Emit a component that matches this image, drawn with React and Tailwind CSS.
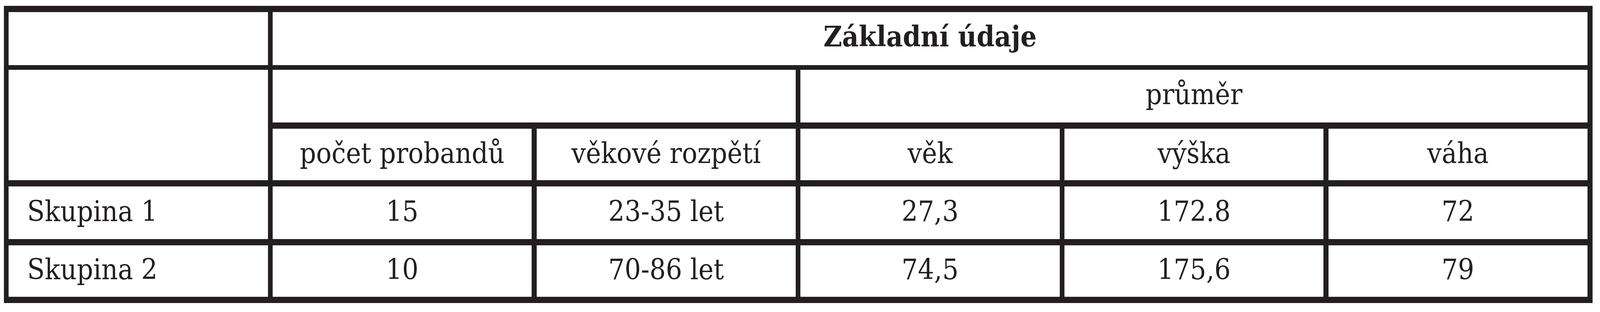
import React from 'react'

const rows = [
  { name: 'Skupina 1', values: ['15', '23-35 let', '27,3', '172.8', '72'] },
  { name: 'Skupina 2', values: ['10', '70-86 let', '74,5', '175,6', '79'] },
]

const headers = ['počet probandů', 'věkové rozpětí', 'věk', 'výška', 'váha']

function App() {
  return (
    <div className="min-h-screen bg-white pt-[15px] pl-[0.24vw]">
      <div className="w-[99.3vw] bg-[#231f20] pt-[16px] pb-[16px] pl-[0.3vw] pr-[0.32vw] flex flex-col gap-[12px] font-['DejaVu_Serif_Condensed','DejaVu_Serif',serif] font-stretch-condensed text-[1.78vw] leading-none text-[#231f20]">
        {/* title row */}
        <div className="grid grid-cols-6 gap-x-[0.3vw]">
          <div className="bg-white h-[136px]"></div>
          <div className="col-span-5 bg-white h-[136px] flex items-center justify-center pb-[10px] font-bold">
            Základní údaje
          </div>
        </div>

        {/* header + data */}
        <div className="grid grid-cols-6 grid-rows-[135px_132px_135px_132px] gap-x-[0.3vw] gap-y-[16px]">
          <div className="row-span-2 bg-white"></div>
          <div className="col-span-2 bg-white"></div>
          <div className="col-span-3 bg-white flex items-center justify-center pb-[9px]">průměr</div>

          {headers.map((h) => (
            <div key={h} className="bg-white flex items-center justify-center pb-[6px]">
              {h}
            </div>
          ))}

          {rows.map((r) => (
            <React.Fragment key={r.name}>
              <div className="bg-white flex items-center pl-[1.16vw] pb-[7px]">{r.name}</div>
              {r.values.map((v, i) => (
                <div key={i} className="bg-white flex items-center justify-center pb-[7px]">
                  {v}
                </div>
              ))}
            </React.Fragment>
          ))}
        </div>
      </div>
    </div>
  )
}

export default App
